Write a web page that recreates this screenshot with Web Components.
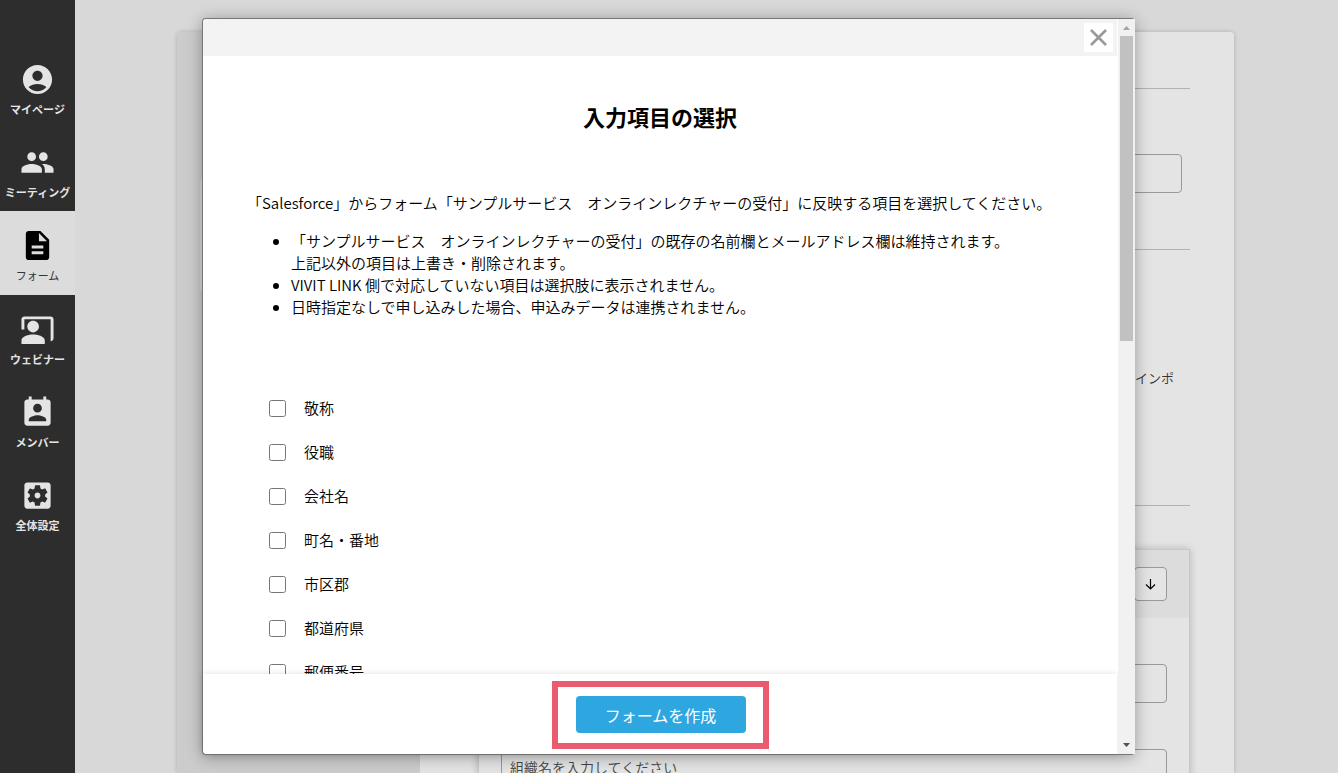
<!DOCTYPE html>
<html lang="ja">
<head>
<meta charset="utf-8">
<meta name="viewport" content="width=device-width, initial-scale=1">
<title>入力項目の選択</title>
<style>
html,body{height:100%}
body{margin:0;overflow:hidden;background:#d8d8d8;color:#000;font-family:"Noto Sans CJK JP",sans-serif;font-size:15px;line-height:22px;font-weight:350}
</style>
</head>
<body>
<app-shell>
  <side-nav slot="nav">
    <nav-item icon="user">マイページ</nav-item>
    <nav-item icon="group">ミーティング</nav-item>
    <nav-item icon="form" active>フォーム</nav-item>
    <nav-item icon="webinar">ウェビナー</nav-item>
    <nav-item icon="member">メンバー</nav-item>
    <nav-item icon="settings">全体設定</nav-item>
  </side-nav>
  <form-editor></form-editor>
  <modal-dialog slot="modal" heading="入力項目の選択">
    <select-fields></select-fields>
    <primary-button slot="footer">フォームを作成</primary-button>
  </modal-dialog>
</app-shell>
<script>
const make = (name, html, setup) => customElements.define(name, class extends HTMLElement {
  connectedCallback() {
    if (this.shadowRoot) return;
    const t = document.createElement('template');
    t.innerHTML = html;
    this.attachShadow({mode: 'open'}).append(t.content.cloneNode(true));
    if (setup) setup(this, this.shadowRoot);
  }
});

make('app-shell', `<style>
:host{display:flex;height:100vh;position:relative;overflow:hidden}
main{flex:1;min-width:0;display:flex}
</style><slot name="nav"></slot><main><slot></slot></main><slot name="modal"></slot>`);

make('side-nav', `<style>
:host{display:block;flex:none;width:75px;background:#2d2d2d}
nav{display:flex;flex-direction:column;padding-top:45px}
</style><nav><slot></slot></nav>`);

const icons = {
  user: 'M12 2C6.48 2 2 6.48 2 12s4.48 10 10 10 10-4.48 10-10S17.52 2 12 2zm0 4c1.93 0 3.5 1.57 3.5 3.5S13.930 13 12 13s-3.500-1.570-3.500-3.500S10.070 6 12 6zm0 14c-2.030 0-4.430-.82-6.140-2.880C7.550 15.800 9.680 15 12 15s4.450.8 6.140 2.120C16.430 19.180 14.030 20 12 20z',
  group: 'M16 11c1.660 0 2.990-1.340 2.990-3S17.660 5 16 5s-3 1.340-3 3 1.340 3 3 3zm-8 0c1.660 0 2.990-1.340 2.990-3S9.660 5 8 5 5 6.340 5 8s1.340 3 3 3zm0 2c-2.330 0-7 1.170-7 3.500V19h14v-2.500c0-2.330-4.670-3.500-7-3.500zm8 0c-.29 0-.62.02-.97.05 1.160.84 1.970 1.970 1.970 3.450V19h6v-2.500c0-2.330-4.670-3.500-7-3.500z',
  form: 'M14 2H6c-1.100 0-2 .9-2 2v16c0 1.100.9 2 2 2h12c1.100 0 2-.9 2-2V8l-6-6zm2 16H8v-2h8v2zm0-4H8v-2h8v2zm-3-5V3.500L18.500 9H13z',
  webinar: 'M21 3H3c-1.100 0-2 .9-2 2v7h2V5h18v15c1.100 0 2-.9 2-2V5c0-1.100-.9-2-2-2zM9 14c2.210 0 4-1.790 4-4s-1.790-4-4-4-4 1.790-4 4 1.790 4 4 4zm0 1.500c-2.670 0-8 1.100-8 4V22h16v-2.500c0-2.900-5.330-4-8-4z',
  member: 'M19 3h-1V1h-2v2H8V1H6v2H5c-1.110 0-2 .9-2 2v14c0 1.100.89 2 2 2h14c1.100 0 2-.9 2-2V5c0-1.100-.9-2-2-2zm-7 3c1.660 0 3 1.340 3 3s-1.340 3-3 3-3-1.340-3-3 1.340-3 3-3zm6 12H6v-1c0-2 4-3.100 6-3.100s6 1.100 6 3.100v1z',
  settings: 'M12 10c-1.100 0-2 .9-2 2s.9 2 2 2 2-.9 2-2-.9-2-2-2zm7-7H5c-1.110 0-2 .9-2 2v14c0 1.100.89 2 2 2h14c1.110 0 2-.9 2-2V5c0-1.100-.89-2-2-2zm-1.750 9c0 .23-.02.46-.05.68l1.480 1.160c.13.11.17.3.08.45l-1.400 2.420c-.09.15-.27.21-.43.15l-1.740-.7c-.36.28-.76.51-1.180.69l-.26 1.850c-.03.17-.18.3-.35.3h-2.800c-.17 0-.32-.13-.35-.29l-.26-1.850c-.43-.18-.82-.41-1.180-.69l-1.740.7c-.16.06-.34 0-.43-.15l-1.400-2.420c-.09-.15-.05-.34.08-.45l1.480-1.160c-.03-.23-.05-.46-.05-.69s.02-.46.05-.68l-1.480-1.160c-.13-.11-.17-.3-.08-.45l1.400-2.420c.09-.15.27-.21.43-.15l1.740.7c.36-.28.76-.51 1.180-.69l.26-1.850c.03-.17.18-.3.35-.3h2.800c.17 0 .32.13.35.29l.26 1.850c.43.18.82.41 1.180.69l1.740-.7c.16-.06.34 0 .43.15l1.400 2.420c.09.15.05.34-.08.45l-1.480 1.160c.03.23.05.46.05.69z'
};
make('nav-item', `<style>
:host{display:block}
a{display:flex;flex-direction:column;align-items:center;box-sizing:border-box;height:83px;padding-top:17px;gap:4px;color:#e4e4e4;text-decoration:none;font-size:11px;font-weight:700;line-height:16px;white-space:nowrap}
:host([active]) a{height:84px;background:#dcdcdc;color:#333;font-weight:400}
svg{width:35px;height:35px;fill:#e4e4e4}
:host([active]) svg{fill:#000}
</style><a href="#"><svg viewBox="0 0 24 24" aria-hidden="true"><path/></svg><slot></slot></a>`,
(el, root) => root.querySelector('path').setAttribute('d', icons[el.getAttribute('icon')]));

make('form-editor', `<style>
:host{flex:1;min-width:0;display:flex;margin:32px 104px 0 102px;border-radius:4px 4px 0 0;box-shadow:0 0 4px #0003;overflow:hidden}
aside{flex:none;width:243px;box-sizing:border-box;background:#ccc;padding:146px 0 0 23px}
.step{height:114px;border-radius:4px 0 0 4px;background:#d8d8d8}
.panel{flex:1;min-width:0;background:#e4e4e4;padding:0 44px 0 58px}
section{box-sizing:border-box;border-bottom:1px solid #b2b2b2;padding-right:8px}
.title{height:57px}
.name{height:161px;padding-top:65px}
.note{height:256px;padding:118px 16px 0 0;text-align:right;font-size:13px;line-height:20px;color:#333}
p{margin:0}
input{display:block;box-sizing:border-box;width:100%;height:39px;border:1px solid #999;border-radius:4px;background:transparent;padding:0 8px 4px;font:inherit;font-size:14px;color:#333}
input::placeholder{color:#444;opacity:1}
article{margin-top:43px;border:1px solid #c8c8c8;box-shadow:0 0 8px #0003}
header{display:flex;justify-content:flex-end;align-items:center;height:68px;background:#dcdcdc;padding-right:22px}
button{display:flex;align-items:center;justify-content:center;width:33px;height:34px;border:1px solid #999;border-radius:4px;background:#e4e4e4;padding:0}
button svg{width:11px;height:11px;fill:none;stroke:#000;stroke-width:1.200}
.fields{display:grid;gap:46px;padding:46px 22px}
</style>
<aside><div class="step"></div></aside>
<div class="panel">
<section class="title"></section>
<section class="name"><input type="text" aria-label="フォーム名"></section>
<section class="note"><p>インポ</p></section>
<article><header><button type="button" aria-label="下へ移動"><svg viewBox="0 0 11 11"><path d="M5.500 0v10M1 5.500l4.500 4.500L10 5.500"/></svg></button></header>
<div class="fields"><input type="text" aria-label="項目名"><input type="text" aria-label="組織名" placeholder="組織名を入力してください"></div></article>
</div>`);

make('modal-dialog', `<style>
:host{position:absolute;inset:0;display:flex;padding:18px 203px 18px 202px}
.dialog{flex:1;min-width:0;display:flex;box-sizing:border-box;border:1px solid #777;border-right:0;border-radius:4px;background:#fff;box-shadow:0 2px 16px #0005}
.body{flex:1;min-width:0;display:flex;flex-direction:column}
header{flex:none;display:flex;justify-content:flex-end;align-items:center;box-sizing:border-box;height:37px;padding-right:4px;background:#f3f3f3;border-top-left-radius:4px}
.close{display:flex;align-items:center;justify-content:center;width:29px;height:29px;border:0;padding:0;background:#fff}
.close svg{width:17px;height:17px;stroke:#999;stroke-width:2.600;fill:none}
.content{flex:1;min-height:0;overflow:hidden;padding:44px 44px 0}
h1{margin:0 0 60px;text-align:center;font-size:22px;line-height:32px;font-weight:700}
footer{flex:none;display:flex;align-items:center;justify-content:center;box-sizing:border-box;height:80px;padding-top:2px;box-shadow:0 0 6px #0002;border-bottom-left-radius:4px}
.bar{flex:none;width:17px;margin-left:1px;background:#f1f1f1;display:flex;flex-direction:column;align-items:center}
.bar svg{flex:none;width:17px;height:17px}
.track{flex:1;width:13px;display:flex;flex-direction:column}
.thumb{flex:10;background:#c1c1c1}
.rest{flex:13}
</style>
<div class="dialog" role="dialog" aria-modal="true" aria-labelledby="h">
<div class="body">
<header><button class="close" type="button" aria-label="閉じる"><svg viewBox="0 0 17 17"><path d="M1 1l15 15M16 1L1 16"/></svg></button></header>
<div class="content"><h1 id="h"></h1><slot></slot></div>
<footer><slot name="footer"></slot></footer>
</div>
<div class="bar" aria-hidden="true"><svg viewBox="0 0 17 17"><path fill="#a3a3a3" d="M5 11h7L8.500 7z"/></svg><div class="track"><div class="thumb"></div><div class="rest"></div></div><svg viewBox="0 0 17 17"><path fill="#505050" d="M5 6h7L8.500 10z"/></svg></div>
</div>`, (el, root) => root.querySelector('h1').textContent = el.getAttribute('heading'));

make('select-fields', `<style>
:host{display:block}
p{margin:0 0 16px}
ul{margin:0 0 68px;padding-left:44px}
fieldset{border:0;margin:0;padding:0 0 0 22px;min-width:0}
</style>
<p>「Salesforce」からフォーム「サンプルサービス　オンラインレクチャーの受付」に反映する項目を選択してください。</p>
<ul><li>「サンプルサービス　オンラインレクチャーの受付」の既存の名前欄とメールアドレス欄は維持されます。<br>上記以外の項目は上書き・削除されます。</li>
<li>VIVIT LINK 側で対応していない項目は選択肢に表示されません。</li>
<li>日時指定なしで申し込みした場合、申込みデータは連携されません。</li></ul>
<fieldset aria-label="入力項目"><check-row>敬称</check-row><check-row>役職</check-row><check-row>会社名</check-row><check-row>町名・番地</check-row><check-row>市区郡</check-row><check-row>都道府県</check-row><check-row>郵便番号</check-row></fieldset>`);

make('check-row', `<style>
:host{display:block}
label{display:flex;align-items:center;gap:18px;height:44px}
input{width:17px;height:17px;margin:0}
</style><label><input type="checkbox"><span><slot></slot></span></label>`);

make('primary-button', `<style>
:host{display:block;border:6px solid #ea5b70;padding:9px 17px 10px 18px}
button{display:block;width:170px;height:37px;border:0;border-radius:4px;padding:0;background:#2ea6e0;color:#fff;font:inherit;font-size:16px;font-weight:400}
</style><button type="button"><slot></slot></button>`);
</script>
</body>
</html>
